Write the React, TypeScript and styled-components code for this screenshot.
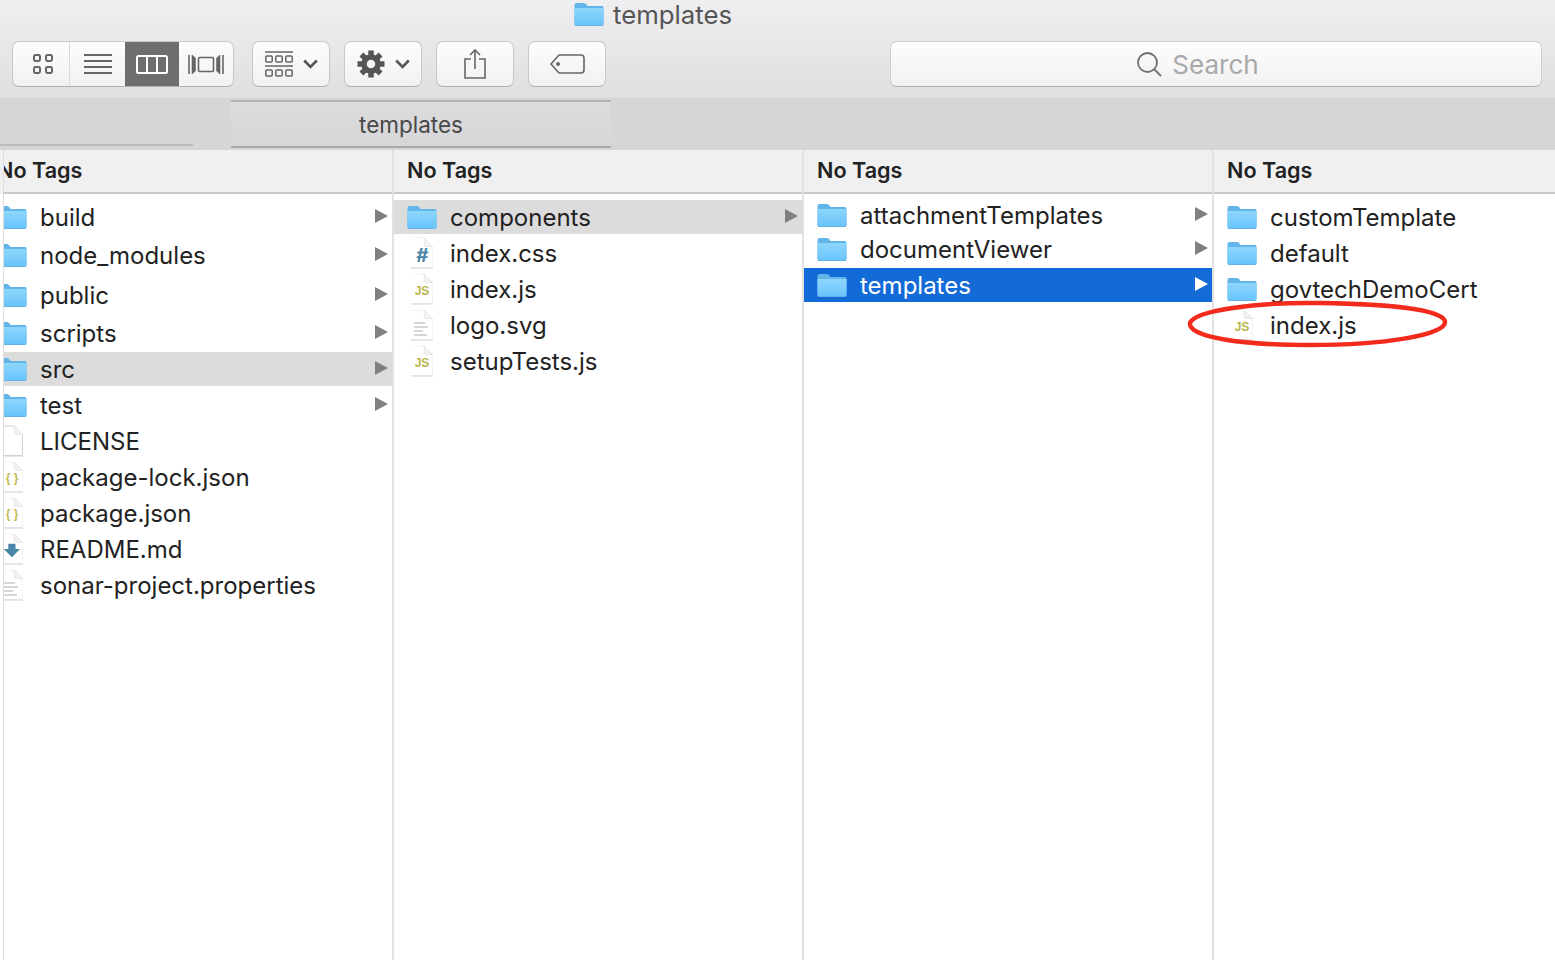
import type { ReactNode } from "react";
import styled, { createGlobalStyle } from "styled-components";

const GlobalStyle = createGlobalStyle`
  html, body {
    margin: 0;
    padding: 0;
    background: #fff;
    font-family: Inter, "Liberation Sans", sans-serif;
  }
`;

const Window = styled.div`
  position: relative;
  width: 1555px;
  height: 960px;
  overflow: hidden;
  background: #fff;
`;

const Chrome = styled.header`
  background: linear-gradient(#efeef0, #dfdee0);
`;

const TitleBar = styled.div`
  height: 30px;
  padding-bottom: 2px;
  box-sizing: border-box;
  display: flex;
  align-items: center;
  gap: 9px;
  padding-left: 574px;
  font-size: 25.8px;
  color: #555;
`;

const Toolbar = styled.div`
  height: 57px;
  padding: 11px 13px 0 12px;
  display: flex;
  align-items: flex-start;
`;

const Segmented = styled.div`
  display: flex;
  height: 46px;
  border-radius: 7px;
  border: 1px solid #c9c8ca;
  border-bottom-color: #b0afb1;
  box-sizing: border-box;
  overflow: hidden;
  background: linear-gradient(#fdfdfd, #f1f1f1);
  margin-right: 18px;
`;

const Segment = styled.div<{ $w: number; $active?: boolean; $divider?: boolean }>`
  width: ${(p) => p.$w}px;
  display: flex;
  align-items: center;
  justify-content: center;
  box-sizing: border-box;
  color: ${(p) => (p.$active ? "#fff" : "#666")};
  background: ${(p) => (p.$active ? "#6e6e6e" : "transparent")};
  border-right: ${(p) => (p.$divider ? "1px solid #d9d9d9" : "none")};
  padding-left: ${(p) => (p.$divider ? "4px" : "0")};
`;

const ToolButton = styled.div`
  width: 78px;
  height: 46px;
  box-sizing: border-box;
  margin-right: 14px;
  border-radius: 7px;
  border: 1px solid #c9c8ca;
  border-bottom-color: #b0afb1;
  background: linear-gradient(#fdfdfd, #f1f1f1);
  color: #666;
  display: flex;
  align-items: center;
  justify-content: center;
  gap: 10px;
`;

const SearchField = styled.div`
  margin-left: auto;
  width: 652px;
  height: 46px;
  box-sizing: border-box;
  border-radius: 7px;
  border: 1px solid #cfcecf;
  border-bottom-color: #b0afb1;
  background: linear-gradient(#fdfdfd, #f1f1f1);
  display: flex;
  align-items: center;
  justify-content: center;
  gap: 10px;
  padding-right: 36px;
  font-size: 26px;
  color: #a9a9a9;
`;

const TabBar = styled.div`
  height: 52px;
  box-sizing: border-box;
  background: #d6d5d8;
  display: flex;
  padding-top: 2px;
`;

const InactiveTab = styled.div`
  width: 231px;
  height: 46px;
  box-sizing: border-box;
  box-shadow: inset 0 -2px 0 #bcbbbd;
  clip-path: inset(0 38px 0 0);
`;

const ActiveTab = styled.div`
  width: 380px;
  height: 48px;
  box-sizing: border-box;
  border-top: 2px solid #b4b4b5;
  border-bottom: 2px solid #aaa9ab;
  background: linear-gradient(#dcdbdd, #d7d6d9);
  display: flex;
  align-items: center;
  justify-content: center;
  padding-right: 20px;
  font-size: 22.5px;
  color: #484848;
`;

const Browser = styled.main`
  display: flex;
  height: 810px;
`;

const Gutter = styled.div`
  width: 3px;
  background: linear-gradient(#f0f0f0 44px, #fff 44px);
  border-right: 1px solid #dcdcdc;
`;

const Column = styled.section<{ $w: number; $last?: boolean }>`
  width: ${(p) => p.$w}px;
  box-sizing: border-box;
  overflow: hidden;
  border-right: ${(p) => (p.$last ? "none" : "2px solid #e2e2e2")};
`;

const ScrollInner = styled.div<{ $shift: number }>`
  margin-left: ${(p) => p.$shift}px;
`;

const ColumnHeader = styled.div`
  height: 44px;
  box-sizing: border-box;
  background: #f0f0f0;
  border-bottom: 2px solid #c8c8c8;
  padding: 0 0 3px 13px;
  display: flex;
  align-items: center;
  font-size: 21.6px;
  font-weight: 600;
  color: #222;
`;

const RowList = styled.div<{ $top: number }>`
  padding-top: ${(p) => p.$top}px;
`;

const Row = styled.div<{ $gap: number; $state?: "active" | "muted" }>`
  height: 34px;
  margin-top: ${(p) => p.$gap}px;
  display: flex;
  align-items: center;
  padding-right: 4px;
  font-size: 24px;
  color: ${(p) => (p.$state === "active" ? "#fff" : "#222")};
  background: ${(p) =>
    p.$state === "active" ? "#126bd6" : p.$state === "muted" ? "#dcdcdc" : "transparent"};
`;

const IconSlot = styled.span`
  width: 30px;
  margin: 0 13px;
  flex: none;
  display: flex;
  justify-content: center;
`;

const Name = styled.span`
  flex: 1;
  white-space: nowrap;
`;

const Arrow = styled.svg<{ $active?: boolean }>`
  width: 13px;
  height: 14px;
  flex: none;
  margin-bottom: 2px;
  fill: ${(p) => (p.$active ? "#fff" : "#808080")};
`;

const Annotation = styled.svg`
  position: absolute;
  left: 1180px;
  top: 295px;
  width: 275px;
  height: 60px;
  fill: none;
  stroke: #f22b1c;
  stroke-width: 4.5;
`;

const Folder = () => (
  <svg width="30" height="24" viewBox="0 0 30 24">
    <defs>
      <linearGradient id="folderFill" x1="0" y1="0" x2="0" y2="1">
        <stop offset="0" stopColor="#8ed6fc" />
        <stop offset="1" stopColor="#6ac4fa" />
      </linearGradient>
    </defs>
    <path d="M.5 3Q.5 1 2.5 1H10Q11.5 1 12.5 2.5L13.5 4H28Q29.5 4 29.5 6V22Q29.5 24 28 24H2Q.5 24 .5 22Z" fill="#62b5e8" />
    <path d="M.5 6H29.5V22Q29.5 23 28 23H2Q.5 23 .5 22Z" fill="url(#folderFill)" />
  </svg>
);

const Doc = ({ children, outlined }: { children?: ReactNode; outlined?: boolean }) => (
  <svg width="24" height="32" viewBox="0 0 24 32">
    <path
      d="M1.5 1H14L22.5 9.5V30.5H1.5"
      fill="#fff"
      stroke={outlined ? "#cfcfcf" : "#f3f3f3"}
    />
    <path d="M14 1L14.5 9L22.5 9.5Z" fill="#f4f4f4" stroke="#e6e6e6" />
    <path d="M1 31H23" stroke="#d2d2d2" />
    {children}
  </svg>
);

const Glyph = styled.text<{ $color: string; $size: number }>`
  font-family: "Liberation Sans", sans-serif;
  font-weight: 700;
  font-size: ${(p) => p.$size}px;
  fill: ${(p) => p.$color};
  text-anchor: middle;
`;

const JsDoc = () => (
  <Doc>
    <Glyph x="12" y="21.5" $color="#b9b64a" $size={12}>JS</Glyph>
  </Doc>
);
const CssDoc = () => (
  <Doc>
    <Glyph x="12" y="25" $color="#4a86a8" $size={21}>#</Glyph>
    <Glyph x="12.6" y="25" $color="#4a86a8" $size={21}>#</Glyph>
  </Doc>
);
const JsonDoc = () => (
  <Doc>
    <Glyph x="12" y="21" $color="#bfbd55" $size={12}>{"{ }"}</Glyph>
  </Doc>
);
const MdDoc = () => (
  <Doc>
    <path d="M7 13H15V19H20L11 28L2 19H7Z" fill="#4a86a8" transform="translate(2 -1) scale(.9)" />
  </Doc>
);
const TextDoc = () => (
  <Doc>
    <path d="M4 14H15M4 18H18M4 22H13M4 26H17" stroke="#c9c9c9" strokeWidth="1.5" />
  </Doc>
);

type Kind = "folder" | "js" | "css" | "json" | "md" | "text" | "blank";

const kindIcon: Record<Kind, ReactNode> = {
  folder: <Folder />,
  js: <JsDoc />,
  css: <CssDoc />,
  json: <JsonDoc />,
  md: <MdDoc />,
  text: <TextDoc />,
  blank: <Doc outlined />,
};

interface Entry {
  name: string;
  kind: Kind;
  gap: number;
  state?: "active" | "muted";
}

const f = (name: string, gap = 2, state?: Entry["state"]): Entry => ({ name, kind: "folder", gap, state });
const d = (name: string, kind: Kind): Entry => ({ name, kind, gap: 2 });

const columns: { w: number; top: number; shift?: number; last?: boolean; rows: Entry[] }[] = [
  {
    w: 390,
    top: 6,
    shift: -20,
    rows: [
      f("build", 0),
      f("node_modules", 4),
      f("public", 6),
      f("scripts", 4),
      f("src", 2, "muted"),
      f("test"),
      d("LICENSE", "blank"),
      d("package-lock.json", "json"),
      d("package.json", "json"),
      d("README.md", "md"),
      d("sonar-project.properties", "text"),
    ],
  },
  {
    w: 410,
    top: 6,
    rows: [
      f("components", 0, "muted"),
      d("index.css", "css"),
      d("index.js", "js"),
      d("logo.svg", "text"),
      d("setupTests.js", "js"),
    ],
  },
  {
    w: 410,
    top: 4,
    rows: [f("attachmentTemplates", 0), f("documentViewer", 0), f("templates", 2, "active")],
  },
  {
    w: 341,
    top: 6,
    last: true,
    rows: [f("customTemplate", 0), f("default"), f("govtechDemoCert"), d("index.js", "js")],
  },
];

const Chevron = () => (
  <svg width="15" height="10" viewBox="0 0 15 10" fill="none" stroke="#555" strokeWidth="2.6">
    <path d="M1.2 1.5L7.5 8L13.8 1.5" />
  </svg>
);

const GridIcon = () => (
  <svg width="20" height="20" viewBox="0 0 20 20" fill="none" stroke="currentColor" strokeWidth="2">
    <rect x="1" y="1" width="6" height="6" rx="1.4" />
    <rect x="13" y="1" width="6" height="6" rx="1.4" />
    <rect x="1" y="13" width="6" height="6" rx="1.4" />
    <rect x="13" y="13" width="6" height="6" rx="1.4" />
  </svg>
);

const ListIcon = () => (
  <svg width="28" height="20" viewBox="0 0 28 20" stroke="currentColor" strokeWidth="1.8">
    <path d="M0 1H28M0 7H28M0 13H28M0 19H28" />
  </svg>
);

const ColumnsIcon = () => (
  <svg width="32" height="19" viewBox="0 0 32 19" fill="none" stroke="currentColor" strokeWidth="2">
    <rect x="1" y="1" width="30" height="17" rx="1.5" />
    <path d="M11 1V18M21 1V18" />
  </svg>
);

const CoverFlowIcon = () => (
  <svg width="36" height="21" viewBox="0 0 36 21" fill="none" stroke="currentColor" strokeWidth="1.6">
    <rect x="10.5" y="3.5" width="15" height="14" rx="1" />
    <path d="M1 1V20M35 1V20" />
    <path d="M4 1L7.5 4V17L4 20ZM32 1L28.5 4V17L32 20Z" fill="currentColor" strokeWidth=".6" />
  </svg>
);

const ArrangeIcon = () => (
  <svg width="28" height="26" viewBox="0 0 28 26" fill="none" stroke="currentColor" strokeWidth="1.5">
    <path d="M0 1H28M0 15H28" />
    <rect x=".8" y="5" width="6.4" height="6" rx="1" />
    <rect x="10.8" y="5" width="6.4" height="6" rx="1" />
    <rect x="20.8" y="5" width="6.4" height="6" rx="1" />
    <rect x=".8" y="19" width="6.4" height="6" rx="1" />
    <rect x="10.8" y="19" width="6.4" height="6" rx="1" />
    <rect x="20.8" y="19" width="6.4" height="6" rx="1" />
  </svg>
);

const GearIcon = () => (
  <svg width="28" height="28" viewBox="0 0 28 28" fill="none" stroke="#555">
    <circle cx="14" cy="14" r="7" strokeWidth="5.5" />
    {[0, 45, 90, 135].map((a) => (
      <path key={a} d="M14 .5V27.5" strokeWidth="5.5" strokeDasharray="6 15 6" transform={`rotate(${a} 14 14)`} />
    ))}
  </svg>
);

const ShareIcon = () => (
  <svg width="22" height="30" viewBox="0 0 22 30" fill="none" stroke="currentColor" strokeWidth="1.6">
    <path d="M7 10H1V29H21V10H15M11 20V1.5M6 6L11 1L16 6" />
  </svg>
);

const TagIcon = () => (
  <svg width="35" height="20" viewBox="0 0 35 20" fill="none" stroke="currentColor" strokeWidth="1.6">
    <path d="M9 1H31Q34 1 34 4V16Q34 19 31 19H9L1 10Z" strokeLinejoin="round" />
    <circle cx="8" cy="10" r="1.2" fill="currentColor" />
  </svg>
);

const SearchIcon = () => (
  <svg width="25" height="25" viewBox="0 0 25 25" fill="none" stroke="#707070" strokeWidth="1.8">
    <circle cx="10.5" cy="10.5" r="9.5" />
    <path d="M17.5 17.5L24 24" />
  </svg>
);

export default function App() {
  return (
    <Window>
      <GlobalStyle />
      <Chrome>
        <TitleBar>
          <Folder />
          <span>templates</span>
        </TitleBar>
        <Toolbar>
          <Segmented>
            <Segment $w={57} $divider><GridIcon /></Segment>
            <Segment $w={55}><ListIcon /></Segment>
            <Segment $w={54} $active><ColumnsIcon /></Segment>
            <Segment $w={54}><CoverFlowIcon /></Segment>
          </Segmented>
          <ToolButton><ArrangeIcon /><Chevron /></ToolButton>
          <ToolButton><GearIcon /><Chevron /></ToolButton>
          <ToolButton><ShareIcon /></ToolButton>
          <ToolButton><TagIcon /></ToolButton>
          <SearchField><SearchIcon /><span>Search</span></SearchField>
        </Toolbar>
      </Chrome>
      <TabBar>
        <InactiveTab />
        <ActiveTab>templates</ActiveTab>
      </TabBar>
      <Browser>
        <Gutter />
        {columns.map((col, i) => (
          <Column key={i} $w={col.w} $last={col.last}>
            <ScrollInner $shift={col.shift ?? 0}>
              <ColumnHeader>No Tags</ColumnHeader>
              <RowList $top={col.top}>
                {col.rows.map((row) => (
                  <Row key={row.name} $gap={row.gap} $state={row.state}>
                    <IconSlot>{kindIcon[row.kind]}</IconSlot>
                    <Name>{row.name}</Name>
                    {row.kind === "folder" && !col.last && (
                      <Arrow viewBox="0 0 13 14" $active={row.state === "active"}>
                        <path d="M0 0L13 7L0 14Z" />
                      </Arrow>
                    )}
                  </Row>
                ))}
              </RowList>
            </ScrollInner>
          </Column>
        ))}
      </Browser>
      <Annotation viewBox="1180 295 275 60">
        <path d="M1190 323C1195 310 1260 302 1320 303C1390 304 1445 310 1445 322C1445 335 1385 345 1310 345C1240 345 1188 337 1190 323Z" />
      </Annotation>
    </Window>
  );
}
